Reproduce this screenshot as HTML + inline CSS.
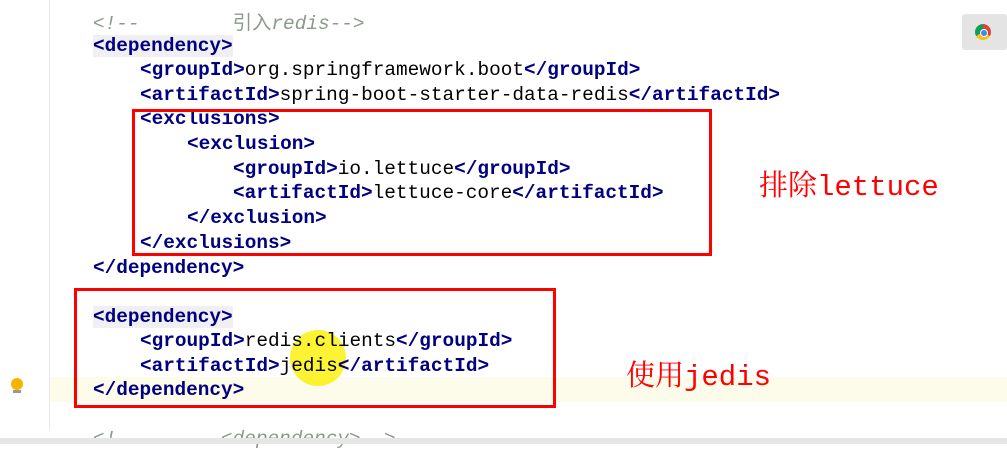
<!DOCTYPE html>
<html><head><meta charset="utf-8"><style>
body{margin:0;width:1007px;height:444px;overflow:hidden;background:#fff;position:relative;font-family:"Liberation Mono",monospace}
.gut{position:absolute;left:49px;top:0;width:1px;height:430px;background:#e8e8e8}
.cur{position:absolute;left:50px;top:377px;width:957px;height:25px;background:#fdfbe9}
.ln{position:absolute;left:0;font-size:19.4px;line-height:24px;white-space:pre;color:#000}
.t{color:#000080;font-weight:bold}
.tb{background:#efeff4}
.c{color:#8a9a8a;font-style:italic}
.box{position:absolute;border:3px solid #f00}
.lbl{position:absolute;color:#f00;font-size:29px;font-family:"Liberation Mono","Noto Serif CJK SC",serif;white-space:nowrap}
.bot{position:absolute;left:0;top:438px;width:1007px;height:6px;background:#e6e6e6}
</style></head><body>
<div class="gut"></div>
<div class="cur"></div>
<div style="position:absolute;left:290px;top:330px;width:56px;height:56px;border-radius:50%;background:rgba(250,240,0,0.8)"></div>
<div class="ln c" style="top:9px;left:93px">&lt;!--        <span style="font-family:'Noto Sans CJK SC',sans-serif;font-style:normal">引入</span>redis--&gt;</div>
<div class="ln" style="top:34px;left:93px"><span class="tb"><span class="t">&lt;dependency&gt;</span></span></div>
<div class="ln" style="top:58px;left:140px"><span class="t">&lt;groupId&gt;</span>org.springframework.boot<span class="t">&lt;/groupId&gt;</span></div>
<div class="ln" style="top:83px;left:140px"><span class="t">&lt;artifactId&gt;</span>spring-boot-starter-data-redis<span class="t">&lt;/artifactId&gt;</span></div>
<div class="ln" style="top:107px;left:140px"><span class="t">&lt;exclusions&gt;</span></div>
<div class="ln" style="top:132px;left:187px"><span class="t">&lt;exclusion&gt;</span></div>
<div class="ln" style="top:157px;left:233px"><span class="t">&lt;groupId&gt;</span>io.lettuce<span class="t">&lt;/groupId&gt;</span></div>
<div class="ln" style="top:181px;left:233px"><span class="t">&lt;artifactId&gt;</span>lettuce-core<span class="t">&lt;/artifactId&gt;</span></div>
<div class="ln" style="top:206px;left:187px"><span class="t">&lt;/exclusion&gt;</span></div>
<div class="ln" style="top:231px;left:140px"><span class="t">&lt;/exclusions&gt;</span></div>
<div class="ln" style="top:256px;left:93px"><span class="t">&lt;/dependency&gt;</span></div>
<div class="ln" style="top:305px;left:93px"><span class="tb"><span class="t">&lt;dependency&gt;</span></span></div>
<div class="ln" style="top:329px;left:140px"><span class="t">&lt;groupId&gt;</span>redis.clients<span class="t">&lt;/groupId&gt;</span></div>
<div class="ln" style="top:354px;left:140px"><span class="t">&lt;artifactId&gt;</span>jedis<span class="t">&lt;/artifactId&gt;</span></div>
<div class="ln" style="top:378px;left:93px"><span class="t">&lt;/dependency&gt;</span></div>
<div class="ln c" style="top:427px;left:93px">&lt;!--       &lt;dependency&gt;--&gt;</div>
<div style="position:absolute;left:11px;top:378px;width:12px;height:12px;border-radius:50%;background:#f5b400"></div>
<div style="position:absolute;left:13px;top:390px;width:8px;height:3px;background:#999"></div>
<div class="box" style="left:132px;top:109px;width:574px;height:141px"></div>
<div class="box" style="left:74px;top:288px;width:476px;height:114px"></div>
<div class="lbl" style="left:759px;top:163px">排除lettuce</div>
<div class="lbl" style="left:626px;top:353px">使用jedis</div>
<div style="position:absolute;left:962px;top:14px;width:45px;height:36px;background:#e4e4e4;border-radius:3px"></div>
<div style="position:absolute;left:975px;top:24px;width:16px;height:16px;border-radius:50%;background:conic-gradient(#db4437 0 120deg,#f4c20d 120deg 240deg,#0f9d58 240deg 360deg)"></div>
<div style="position:absolute;left:980px;top:29px;width:6px;height:6px;border-radius:50%;background:#4285f4;border:1px solid #fff"></div>
<div class="bot"></div>
</body></html>
